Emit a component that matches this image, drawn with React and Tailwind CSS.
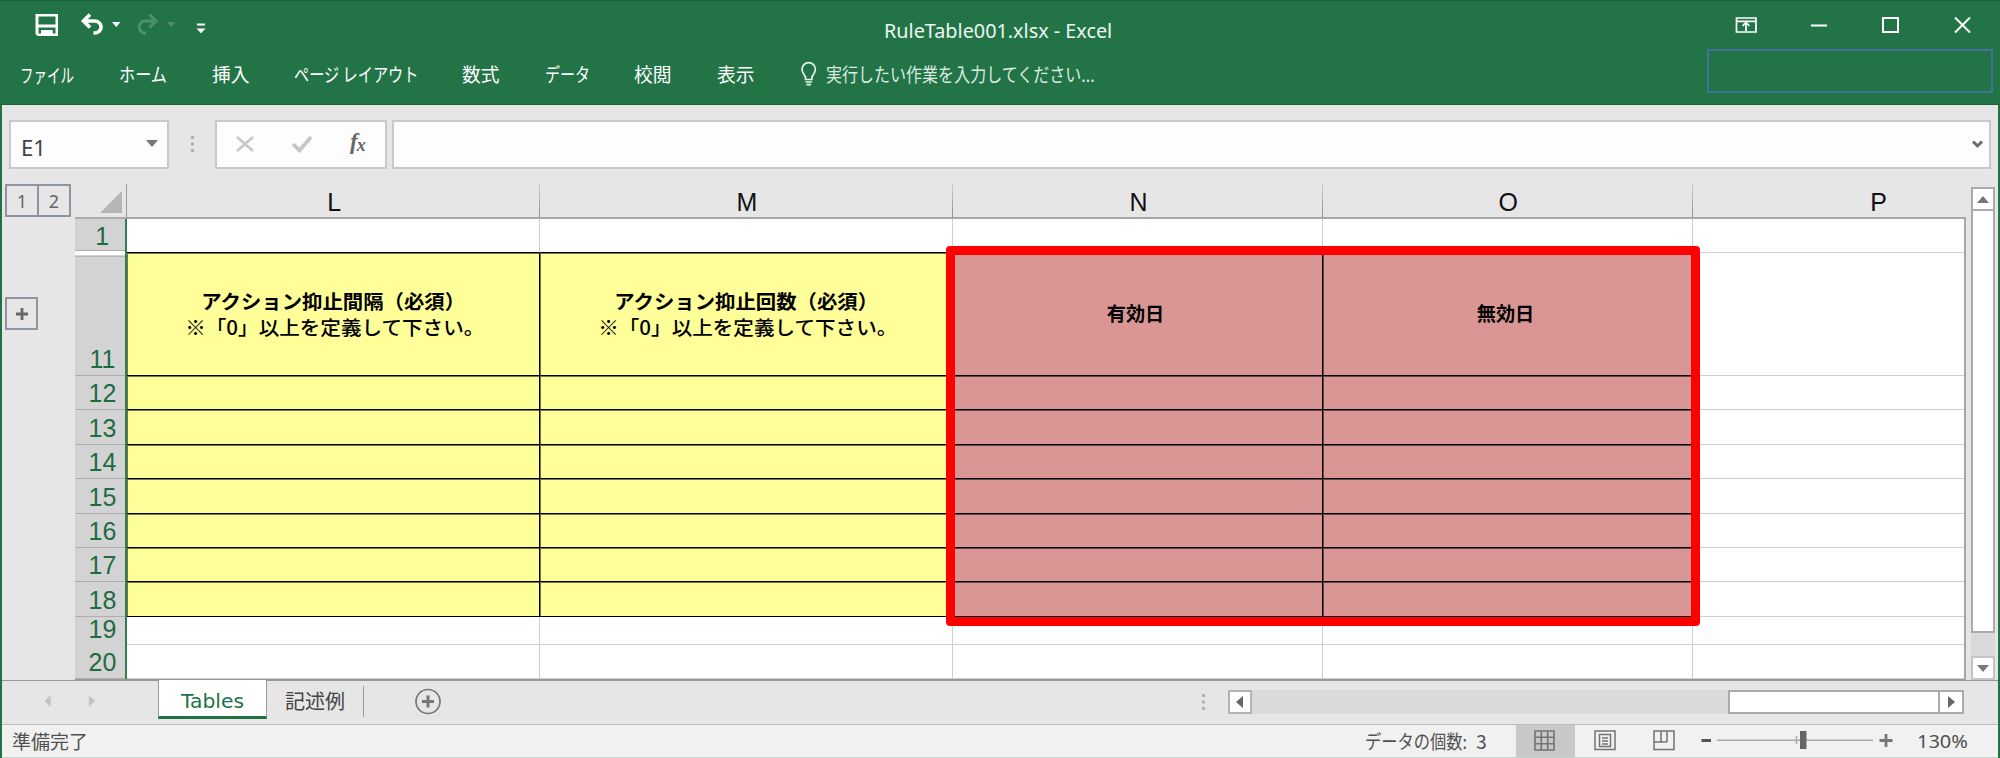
const JP = "font-['Noto_Sans_CJK_JP',sans-serif]";

// Text squeezed to a given horizontal scale, starting at its left edge.
function T({ children, className = "", k = 1, origin = "left" }) {
  return (
    <span
      className={`inline-block whitespace-nowrap ${className}`}
      style={{ transform: `scaleX(${k})`, transformOrigin: origin }}
    >
      {children}
    </span>
  );
}

const menu = [
  { t: "ファイル", w: "w-[99px]", k: 0.71, c: "pt-px" },
  { t: "ホーム", w: "w-[93px]", k: 0.85 },
  { t: "挿入", w: "w-[82px]", k: 0.99 },
  { t: "ページ レイアウト", w: "w-[168px]", k: 0.798 },
  { t: "数式", w: "w-[83px]", k: 0.985 },
  { t: "データ", w: "w-[89px]", k: 0.79 },
  { t: "校閲", w: "w-[83px]", k: 0.985 },
  { t: "表示", w: "w-[82px]", k: 0.985 },
];

function TitleBar() {
  return (
    <div className="flex h-[50px] w-full border-t border-[#1b6339]">
      <svg className="h-[49px] w-[240px] shrink-0" viewBox="0 1 240 49">
        <path fill="#fff" fillRule="evenodd" d="M35.500 14H58v22H37.500l-2-2zM38.500 16.500v8h17v-8zM38.500 27.500v6h2.500v-3.500h11.500v3.500h3v-6z" />
        <path fill="#fff" fillRule="evenodd" d="M41 30h11.500v5H41zM43.500 31.500v3.500h3v-3.500z" />
        <path d="M90 14.500 83.500 21 90 27.500M84 21h10.500a6.600 6 0 0 1 0 12h-1" fill="none" stroke="#fff" strokeWidth="3.600" />
        <path d="M112 22h8.500l-4.250 5z" fill="#fff" />
        <path d="M149.500 14.500 156 21l-6.500 6.500M155.500 21h-11a6.500 6.200 0 0 0 0 12.200h1.500" fill="none" stroke="#4d906b" strokeWidth="3" />
        <path d="M167 22h8.500l-4.250 5z" fill="#4d906b" />
        <path d="M197 23.500h8v2h-8zM196.500 28.500h9l-4.500 4.700z" fill="#fff" />
      </svg>
      <div className="flex flex-1 pl-[644px] pt-[10px] text-[20px] leading-[39px] text-[#eef6f1]">
        <T k={0.99} className="font-['Noto_Sans',sans-serif]">RuleTable001.xlsx - Excel</T>
      </div>
      <svg className="h-[49px] w-[280px] shrink-0" viewBox="1720 1 280 49" fill="none" stroke="#fff" strokeWidth="2">
        <path d="M1736.500 18h19.500v14h-19.500zM1736.500 21.300h19.500M1746 31v-8M1742.500 26l3.500-3.500 3.500 3.500" strokeWidth="1.700" />
        <path d="M1811 25.500h16" />
        <path d="M1883 18h15v14h-15z" />
        <path d="M1955 17.500l15 15M1970 17.500l-15 15" />
      </svg>
    </div>
  );
}

function Menu() {
  return (
    <div className={`flex h-[54px] w-full pl-[20px] text-[19px] leading-[48px] text-white ${JP}`}>
      {menu.map((m) => (
        <div key={m.t} className={`shrink-0 ${m.w} ${m.c || ""}`}>
          <T k={m.k}>{m.t}</T>
        </div>
      ))}
      <svg className="mt-[11px] ml-px h-[28px] w-[18px] shrink-0" viewBox="0 0 18 28" fill="none" stroke="#e8f3ec" strokeWidth="1.700">
        <path d="M5.500 18.500v-2.500C4 13.500 2 11.500 2 8.300a6.700 6.700 0 0 1 13.400 0c0 3.200-2 5.200-3.500 7.700v2.500zM5.500 21h6.500M6.500 23.700h4.500" />
      </svg>
      <div className="ml-[8px] flex-1 text-[#dcebe2]">
        <T k={0.843}>実行したい作業を入力してください...</T>
      </div>
      <div className="mr-[7px] -mt-px h-[44px] w-[286px] shrink-0 border-2 border-[#41719c]" />
    </div>
  );
}

function FormulaBar() {
  return (
    <div className="flex h-[78px] w-full pl-[7px] pt-[15px]">
      <div className="flex h-[49px] w-[160px] justify-between border-2 border-[#c9c9c9] bg-[#fdfdfd] pl-[10px] pr-[9px]">
        <T k={1.03} className="pt-[4px] text-[21.500px] leading-[43px] text-[#444] font-['Noto_Sans',sans-serif]">E1</T>
        <svg className="mt-[18px] h-[8px] w-[12px]" viewBox="0 0 12 8"><path d="M0 0h12L6 7z" fill="#777" /></svg>
      </div>
      <svg className="h-[49px] w-[46px]" viewBox="-1 0 46 49" fill="#b0b0b0">
        <path d="M21 16h3v3h-3zM21 22.500h3v3h-3zM21 29h3v3h-3z" />
      </svg>
      <div className="flex h-[49px] w-[172px] border-2 border-[#c9c9c9] bg-[#fdfdfd]">
        <svg className="h-[45px] w-[120px]" viewBox="217 122 120 45" fill="none" stroke="#c6c6c6">
          <path d="M237 137l16 14M253 137l-16 14" strokeWidth="2.500" />
          <path d="M293 144l6.500 6.500L311 137" strokeWidth="3.600" />
        </svg>
        <div className="flex pl-[13px] pt-[3px] font-['Liberation_Serif',serif] italic leading-[34px] text-[#666]">
          <span className="text-[23px] font-bold">f</span>
          <span className="-ml-px pt-[3px] text-[18px] font-bold">x</span>
        </div>
      </div>
      <div className="ml-[5px] flex h-[49px] w-[1599px] justify-end border-2 border-[#c9c9c9] bg-[#fdfdfd] pr-[6px] pt-[18px]">
        <svg className="h-[9px] w-[11px]" viewBox="0 0 11 9"><path d="M1 1.500 5.500 6 10 1.500" fill="none" stroke="#6a6a6a" strokeWidth="3" /></svg>
      </div>
    </div>
  );
}

const cols = [
  ["L", "w-[413px]"],
  ["M", "w-[413px]"],
  ["N", "w-[370px]"],
  ["O", "w-[370px]"],
];

function ColHead() {
  return (
    <div className="flex h-[36px] w-full pl-[3px]">
      <div className="mt-px flex h-[33px] w-[66px] border-2 border-[#8f959e] text-center text-[18px] leading-[31px] text-[#666] font-['Noto_Sans',sans-serif]">
        <div className="w-[32px] border-r-2 border-[#8f959e]">1</div>
        <div className="flex-1">2</div>
      </div>
      <div className="flex h-[36px] w-[1895px] pl-[4px]">
        <div className="flex h-[36px] w-[51px] border-b-2 border-[#ababab] pl-[25px] pt-[8px]">
          <svg className="h-[22px] w-[22px]" viewBox="0 0 22 22"><path d="M22 0v22H0z" fill="#b5b5b5" /></svg>
        </div>
        <div className="mt-px h-[35px] w-px bg-[#9a9a9a]" />
        {cols.map(([c, w]) => (
          <div key={c} className={`flex h-[36px] ${w} border-b-2 border-[#a6a6a6]`}>
            <div className="flex-1 pl-[2px] text-center text-[26px] leading-[38px] text-[#111] font-['Liberation_Sans',sans-serif]">
              <T k={0.96} origin="center">{c}</T>
            </div>
            <div className="mt-px w-px bg-linear-to-b from-[#cfcfcf] to-[#8e8e8e]" />
          </div>
        ))}
        <div className="h-[36px] flex-1 border-b-2 border-[#a6a6a6] pl-[177px] text-[26px] leading-[38px] text-[#111] font-['Liberation_Sans',sans-serif]">
          <T k={0.96} origin="center">P</T>
        </div>
      </div>
      <div className="ml-[5px] mt-[4px] h-[32px] w-[24px] border-2 border-b-0 border-[#ababab]">
        <div className="flex h-[22px] justify-center border-b-2 border-[#ababab] bg-white pt-[7px]">
          <svg className="h-[7px] w-[12px]" viewBox="0 0 12 7"><path d="M0 7h12L6 0z" fill="#777" /></svg>
        </div>
        <div className="h-[8px] bg-white" />
      </div>
    </div>
  );
}

const rows = [
  { n: "1", h: "h-[34px]", kind: "top" },
  { n: "11", h: "h-[123px]", kind: "head" },
  { n: "12", h: "h-[34px]", kind: "data" },
  { n: "13", h: "h-[35px]", kind: "data" },
  { n: "14", h: "h-[34px]", kind: "data" },
  { n: "15", h: "h-[35px]", kind: "data" },
  { n: "16", h: "h-[34px]", kind: "data" },
  { n: "17", h: "h-[34px]", kind: "data" },
  { n: "18", h: "h-[35px]", kind: "data" },
  { n: "19", h: "h-[28px]", kind: "plain" },
  { n: "20", h: "h-[34px]", kind: "plain" },
];

function HeadText({ a, b }) {
  return (
    <div className={`pt-[35px] text-center font-bold text-black ${JP}`}>
      <div className="text-[19.800px] leading-[26px]"><T k={1.03} origin="center">{a}</T></div>
      <div className="-mt-px pl-[4px] text-[19.500px] leading-[27px] font-medium"><T k={1.055} origin="center">{b}</T></div>
    </div>
  );
}

function Cell({ w, fill, line, children }) {
  return <div className={`flex h-full justify-center border-b border-r ${w} ${fill} ${line}`}>{children}</div>;
}

function DateText({ children }) {
  return (
    <div className={`pr-[4px] pt-[46px] text-[19.200px] font-bold leading-[28px] ${JP}`}>{children}</div>
  );
}

function Row({ r }) {
  const filled = r.kind === "head" || r.kind === "data";
  const head = r.kind === "head";
  const line = filled
    ? "border-black shadow-[inset_1px_1px_0_#00000088]"
    : r.kind === "top"
      ? "border-b-black border-r-[#cfcfcf]"
      : "border-[#cfcfcf]";
  const y = filled ? "bg-[#ffff99]" : "bg-white";
  const p = filled ? "bg-[#da9694]" : "bg-white";
  return (
    <div className={`flex ${r.h}`}>
      <div className="flex w-[50px] flex-col justify-end bg-[#d3d3d3] text-[26px] text-[#1f6b45] font-['Liberation_Sans',sans-serif]">
        {head && <div className="h-[2px] bg-white" />}
        {head && <div className="mt-px h-px bg-[#b5b5b5]" />}
        <div className={`flex flex-1 items-end justify-center pl-[4px] ${r.n === "19" ? "pb-[2px] leading-[28px]" : r.kind === "top" ? "leading-[27px]" : "leading-[31px]"}`}>
          <T k={0.96} origin="center">{r.n}</T>
        </div>
        <div className="h-px bg-[#adadad]" />
        {r.kind === "top" && <div className="h-[2px] bg-white" />}
      </div>
      <div className="w-[2px] bg-[#2f7d52]" />
      <Cell w="w-[413px]" fill={y} line={line}>
        {head && <HeadText a="アクション抑止間隔（必須）" b="※「0」以上を定義して下さい。" />}
      </Cell>
      <Cell w="w-[413px]" fill={y} line={line}>
        {head && <HeadText a="アクション抑止回数（必須）" b="※「0」以上を定義して下さい。" />}
      </Cell>
      <Cell w="w-[370px]" fill={p} line={line}>
        {head && <DateText>有効日</DateText>}
      </Cell>
      <Cell w="w-[370px]" fill={p} line={line}>
        {head && <DateText>無効日</DateText>}
      </Cell>
      <div className="h-full flex-1 border-b border-[#cfcfcf] bg-white" />
    </div>
  );
}

function Sheet() {
  return (
    <div className="relative flex h-[461px] w-full">
      <div className="w-[73px] shrink-0 pl-[3px] pt-[78px]">
        <div className="flex h-[33px] w-[33px] items-center justify-center border-2 border-[#8f959e]">
          <svg className="h-[14px] w-[14px]" viewBox="0 0 14 14"><path d="M7 1v12M1 7h12" stroke="#666" strokeWidth="2.800" /></svg>
        </div>
      </div>
      <div className="flex w-[1891px] flex-col border-r-2 border-[#a6a6a6]">
        {rows.map((r) => <Row key={r.n} r={r} />)}
        <div className="h-px w-full bg-[#999]" />
      </div>
      <div className="ml-[5px] flex w-[24px] flex-col bg-[#dadada]">
        <div className="h-[414px] border-2 border-t-0 border-[#ababab] bg-white" />
        <div className="flex-1" />
        <div className="flex h-[24px] justify-center border-2 border-[#c4c4c4] bg-white pt-[7px]">
          <svg className="h-[7px] w-[12px]" viewBox="0 0 12 7"><path d="M0 0h12L6 7z" fill="#777" /></svg>
        </div>
      </div>
      <div className="absolute left-[944px] top-[27px] h-[380px] w-[754px] rounded-[4px] border-[9px] border-[#fe0000]" />
    </div>
  );
}

function Tabs() {
  return (
    <div className="flex h-[44px] w-full">
      <svg className="h-[44px] w-[156px] border-t border-[#999]" viewBox="2 681 156 44" fill="#c3c3c3">
        <path d="M50 695.500v12l-6.500-6zM89 695.500v12l6.500-6z" />
      </svg>
      <div className="flex h-[39px] w-[109px] justify-center border-x border-b-[3px] border-x-[#999] border-b-[#217346] bg-white text-[19px] leading-[42px] text-[#217346] font-['DejaVu_Sans',sans-serif]">
        <T k={1.07} origin="center">Tables</T>
      </div>
      <div className="flex flex-1 border-t border-[#999]">
        <div className={`w-[96px] pl-[18px] text-[20px] leading-[39px] text-[#444] ${JP}`}>記述例</div>
        <div className="mt-[5px] h-[31px] w-px bg-[#999]" />
        <svg className="ml-[50px] h-[40px] w-[28px]" viewBox="414 681 28 40" fill="none" stroke="#777">
          <circle cx="428" cy="701.500" r="12" strokeWidth="1.700" />
          <path d="M428 695.500v12M422 701.500h12" strokeWidth="3" />
        </svg>
        <svg className="ml-[760px] h-[40px] w-[4px]" viewBox="0 0 4 40" fill="#b0b0b0">
          <path d="M0 13h3v3H0zM0 19.500h3v3H0zM0 26h3v3H0z" />
        </svg>
        <div className="ml-[22px] mt-[9px] flex h-[24px] w-[736px] bg-[#dadada]">
          <div className="flex w-[24px] justify-center border-2 border-[#b2b2b2] bg-white pt-[4px]">
            <svg className="h-[12px] w-[8px]" viewBox="0 0 8 12"><path d="M7 0v12L0 6z" fill="#666" /></svg>
          </div>
          <div className="w-[476px]" />
          <div className="w-[212px] border-2 border-[#ababab] bg-white" />
          <div className="flex w-[24px] justify-center border-2 border-l-0 border-[#ababab] bg-white pt-[4px]">
            <svg className="h-[12px] w-[8px]" viewBox="0 0 8 12"><path d="M1 0v12l7-6z" fill="#666" /></svg>
          </div>
        </div>
      </div>
    </div>
  );
}

function Status() {
  return (
    <div className={`flex h-[34px] w-full border-b border-t border-b-[#c4d4ca] border-t-[#bdbdbd] bg-[#f1f1f1] text-[19px] leading-[31px] text-[#505050] ${JP}`}>
      <div className="w-[1363px] pl-[10px]"><T k={1}>準備完了</T></div>
      <div className="w-[151px]"><T k={0.855}>データの個数:</T><T k={1.02} className="-ml-[8px]">3</T></div>
      <div className="flex w-[59px] justify-center bg-[#c8c8c8] pr-[2px] pt-[5px]">
        <svg className="h-[21px] w-[21px]" viewBox="0 0 21 21" fill="none" stroke="#737373" strokeWidth="1.600">
          <path d="M1 1h19v19H1zM7.300 1v19M13.700 1v19M1 7.300h19M1 13.700h19" />
        </svg>
      </div>
      <svg className="h-[32px] w-[343px]" viewBox="1575 725 343 32" fill="none" stroke="#737373" strokeWidth="1.600">
        <path d="M1595 731h20v18.500h-20zM1599.500 734.500h11v12h-11zM1602 738h6M1602 741h6M1602 744h6" strokeWidth="1.500" />
        <path d="M1654 731h20v18.500h-20zM1661 731v11M1667 731v11M1654 742h13" strokeWidth="1.500" />
        <path d="M1701.500 740.500h9.500" stroke="#555" strokeWidth="3" />
        <path d="M1717 740.300h156M1796.500 736v8" stroke="#a8a8a8" strokeWidth="1.500" />
        <path d="M1800 731h6.500v18h-6.500z" fill="#666" stroke="none" />
        <path d="M1879.500 740.500h13M1886 734v13" stroke="#777" strokeWidth="2.800" />
      </svg>
      <T k={1.08} className="-ml-px text-[18.500px] font-['Noto_Sans',sans-serif]">130%</T>
    </div>
  );
}

export default function App() {
  return (
    <div className="h-[758px] w-[2000px] overflow-hidden bg-[#e6e6e6]">
      <div className="h-[105px] border-b border-[#1b6339] bg-[#227447]">
        <TitleBar />
        <Menu />
      </div>
      <div className="h-[653px] border-x-2 border-l-[#217346] border-r-[#217346]">
        <FormulaBar />
        <ColHead />
        <div className="h-[461px]"><Sheet /></div>
        <Tabs />
        <Status />
      </div>
    </div>
  );
}
